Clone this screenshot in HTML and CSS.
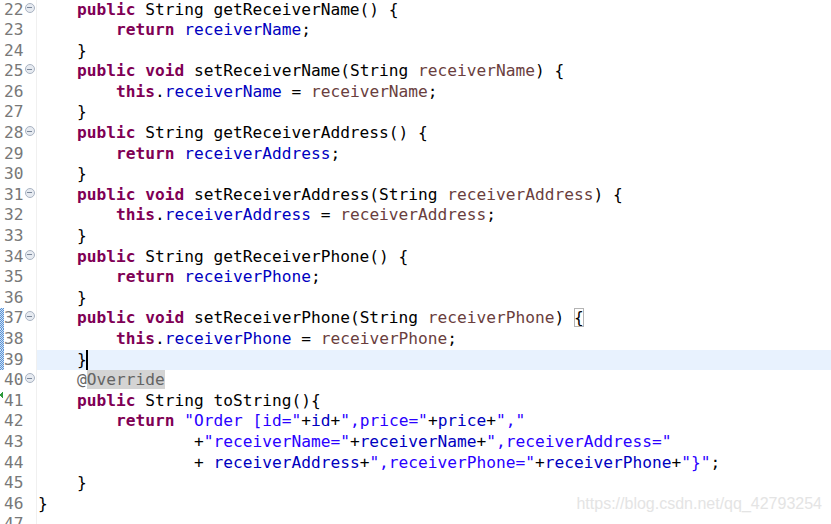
FILE: index.html
```html
<!DOCTYPE html>
<html lang="en">

<head>
    <meta charset="UTF-8" />
    <meta name="viewport" content="width=device-width, initial-scale=1.0" />
    <link rel="stylesheet" href="styles.css">
</head>

<body>
    <div class="editor">
        <div class="line"><div class="gutter"><span class="mark"></span><span class="num">22</span><span class="fold"></span></div><div class="code">    <span class="k">public</span> String getReceiverName() {</div></div>
        <div class="line"><div class="gutter"><span class="mark"></span><span class="num">23</span></div><div class="code">        <span class="k">return</span> <span class="f">receiverName</span>;</div></div>
        <div class="line"><div class="gutter"><span class="mark"></span><span class="num">24</span></div><div class="code">    }</div></div>
        <div class="line"><div class="gutter"><span class="mark"></span><span class="num">25</span><span class="fold"></span></div><div class="code">    <span class="k">public</span> <span class="k">void</span> setReceiverName(String <span class="p">receiverName</span>) {</div></div>
        <div class="line"><div class="gutter"><span class="mark"></span><span class="num">26</span></div><div class="code">        <span class="k">this</span>.<span class="f">receiverName</span> = <span class="p">receiverName</span>;</div></div>
        <div class="line"><div class="gutter"><span class="mark"></span><span class="num">27</span></div><div class="code">    }</div></div>
        <div class="line"><div class="gutter"><span class="mark"></span><span class="num">28</span><span class="fold"></span></div><div class="code">    <span class="k">public</span> String getReceiverAddress() {</div></div>
        <div class="line"><div class="gutter"><span class="mark"></span><span class="num">29</span></div><div class="code">        <span class="k">return</span> <span class="f">receiverAddress</span>;</div></div>
        <div class="line"><div class="gutter"><span class="mark"></span><span class="num">30</span></div><div class="code">    }</div></div>
        <div class="line"><div class="gutter"><span class="mark"></span><span class="num">31</span><span class="fold"></span></div><div class="code">    <span class="k">public</span> <span class="k">void</span> setReceiverAddress(String <span class="p">receiverAddress</span>) {</div></div>
        <div class="line"><div class="gutter"><span class="mark"></span><span class="num">32</span></div><div class="code">        <span class="k">this</span>.<span class="f">receiverAddress</span> = <span class="p">receiverAddress</span>;</div></div>
        <div class="line"><div class="gutter"><span class="mark"></span><span class="num">33</span></div><div class="code">    }</div></div>
        <div class="line"><div class="gutter"><span class="mark"></span><span class="num">34</span><span class="fold"></span></div><div class="code">    <span class="k">public</span> String getReceiverPhone() {</div></div>
        <div class="line"><div class="gutter"><span class="mark"></span><span class="num">35</span></div><div class="code">        <span class="k">return</span> <span class="f">receiverPhone</span>;</div></div>
        <div class="line"><div class="gutter"><span class="mark"></span><span class="num">36</span></div><div class="code">    }</div></div>
        <div class="line"><div class="gutter"><span class="mark changed"></span><span class="num">37</span><span class="fold"></span></div><div class="code">    <span class="k">public</span> <span class="k">void</span> setReceiverPhone(String <span class="p">receiverPhone</span>) <span class="match">{</span></div></div>
        <div class="line"><div class="gutter"><span class="mark changed"></span><span class="num">38</span></div><div class="code">        <span class="k">this</span>.<span class="f">receiverPhone</span> = <span class="p">receiverPhone</span>;</div></div>
        <div class="line"><div class="gutter"><span class="mark changed"></span><span class="num">39</span></div><div class="code current">    }<span class="caret"></span></div></div>
        <div class="line"><div class="gutter"><span class="mark"></span><span class="num">40</span><span class="fold"></span></div><div class="code">    <span class="a">@<span class="occur">Override</span></span></div></div>
        <div class="line"><div class="gutter"><span class="mark override"></span><span class="num">41</span></div><div class="code">    <span class="k">public</span> String toString(){</div></div>
        <div class="line"><div class="gutter"><span class="mark"></span><span class="num">42</span></div><div class="code">        <span class="k">return</span> <span class="s">"Order [id="</span>+<span class="f">id</span>+<span class="s">",price="</span>+<span class="f">price</span>+<span class="s">","</span></div></div>
        <div class="line"><div class="gutter"><span class="mark"></span><span class="num">43</span></div><div class="code">                +<span class="s">"receiverName="</span>+<span class="f">receiverName</span>+<span class="s">",receiverAddress="</span></div></div>
        <div class="line"><div class="gutter"><span class="mark"></span><span class="num">44</span></div><div class="code">                + <span class="f">receiverAddress</span>+<span class="s">",receiverPhone="</span>+<span class="f">receiverPhone</span>+<span class="s">"}"</span>;</div></div>
        <div class="line"><div class="gutter"><span class="mark"></span><span class="num">45</span></div><div class="code">    }</div></div>
        <div class="line"><div class="gutter"><span class="mark"></span><span class="num">46</span></div><div class="code">}</div></div>
        <div class="line"><div class="gutter"><span class="mark"></span><span class="num">47</span></div><div class="code"></div></div>
    </div>

    <div class="watermark">https://blog.csdn.net/qq_42793254</div>
</body>

</html>
```

FILE: styles.css
```css
body {
    margin: 0;
    background-color: #fff;
    height: 524px;
    overflow: hidden;
    position: relative;
}

.editor {
    display: flex;
    flex-direction: column;
    margin-top: -0.5px;
    font-family: 'DejaVu Sans Mono', monospace;
    font-size: 16.2px;
    color: #000;
}

.line {
    display: flex;
    height: 20.6px;
    line-height: 20.6px;
}

.gutter {
    width: 36px;
    flex-shrink: 0;
    display: flex;
    align-items: flex-start;
    border-right: 1px solid #f0f0f0;
    color: #787878;
}

.mark {
    width: 4px;
    height: 100%;
    flex-shrink: 0;
}

.mark.changed {
    background-color: #cfe0f3;
    background-image: conic-gradient(#5a93d6 25%, transparent 0 50%, #5a93d6 0 75%, transparent 0);
    background-size: 2px 2px;
}

.mark.override {
    background: linear-gradient(to bottom right, transparent 50%, #2e9a3c 50%) no-repeat 0 0 / 3px 4px,
        linear-gradient(to top right, transparent 50%, #2e9a3c 50%) no-repeat 0 4px / 3px 4px;
    background-origin: content-box;
    padding-top: 0;
}

.num {
    white-space: pre;
}

.fold {
    width: 8px;
    height: 8px;
    margin: 3px 0 0 1px;
    border: 1px solid #a9b3c2;
    border-radius: 50%;
    background: linear-gradient(#7a879a, #7a879a) no-repeat center / 5px 1px, #e7ebf1;
}

.code {
    flex: 1;
    padding-left: 1px;
    white-space: pre;
}

.current {
    background-color: #e8f2fe;
}

.k {
    color: #7f0055;
    font-weight: bold;
}

.f {
    color: #0000c0;
}

.p {
    color: #6a3e3e;
}

.s {
    color: #2a00ff;
}

.a {
    color: #646464;
}

.occur {
    background-color: #d4d4d4;
}

.match {
    outline: 1px solid #b4b4b4;
    outline-offset: -1px;
}

.caret {
    display: inline-block;
    width: 2px;
    height: 20px;
    margin-left: -1px;
    vertical-align: top;
    background-color: #000;
}

.watermark {
    position: absolute;
    right: 9px;
    bottom: 11px;
    font-family: 'Liberation Sans', Arial, sans-serif;
    font-size: 16px;
    color: #e4e4e4;
}
```
